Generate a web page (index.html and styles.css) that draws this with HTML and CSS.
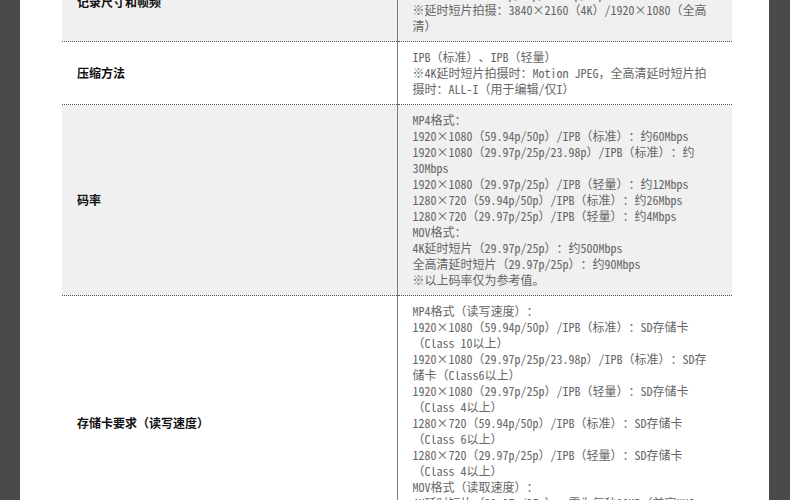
FILE: index.html
```html
<!DOCTYPE html>
<html lang="zh-CN">
<head>
  <meta charset="UTF-8">
  <meta name="viewport" content="width=device-width, initial-scale=1.0">
  <title>规格 - 短片</title>
  <link rel="stylesheet" href="styles.css">
</head>
<body>
  <div class="page">
    <table class="spec-table">
      <tr class="row-gray">
        <th>记录尺寸和帧频</th>
        <td>
          1920×1080（59.94p/50p/29.97p/25p）<br>
          1280×720（59.94p/50p/29.97p/25p）<br>
          ※延时短片拍摄：3840×2160（4K）/1920×1080（全高清）
        </td>
      </tr>
      <tr>
        <th>压缩方法</th>
        <td>
          IPB（标准）、IPB（轻量）<br>
          ※4K延时短片拍摄时：Motion JPEG，全高清延时短片拍摄时：ALL-I（用于编辑/仅I）
        </td>
      </tr>
      <tr class="row-gray">
        <th>码率</th>
        <td>
          MP4格式：<br>
          1920×1080（59.94p/50p）/IPB（标准）：约60Mbps<br>
          1920×1080（29.97p/25p/23.98p）/IPB（标准）：约30Mbps<br>
          1920×1080（29.97p/25p）/IPB（轻量）：约12Mbps<br>
          1280×720（59.94p/50p）/IPB（标准）：约26Mbps<br>
          1280×720（29.97p/25p）/IPB（轻量）：约4Mbps<br>
          MOV格式：<br>
          4K延时短片（29.97p/25p）：约500Mbps<br>
          全高清延时短片（29.97p/25p）：约90Mbps<br>
          ※以上码率仅为参考值。
        </td>
      </tr>
      <tr>
        <th>存储卡要求（读写速度）</th>
        <td>
          MP4格式（读写速度）：<br>
          1920×1080（59.94p/50p）/IPB（标准）：SD存储卡（Class 10以上）<br>
          1920×1080（29.97p/25p/23.98p）/IPB（标准）：SD存储卡（Class6以上）<br>
          1920×1080（29.97p/25p）/IPB（轻量）：SD存储卡（Class 4以上）<br>
          1280×720（59.94p/50p）/IPB（标准）：SD存储卡（Class 6以上）<br>
          1280×720（29.97p/25p）/IPB（轻量）：SD存储卡（Class 4以上）<br>
          MOV格式（读取速度）：<br>
          4K延时短片（29.97p/25p）：需为每秒90MB（兼容UHS-I）以上的SD存储卡<br>
          全高清延时短片：SD存储卡（Class 10以上）
        </td>
      </tr>
    </table>
  </div>
</body>
</html>
```

FILE: styles.css
```css
html,
body {
  margin: 0;
  padding: 0;
}

body {
  background: #4a4a4a;
  font-family: "Noto Sans Mono CJK SC", "Noto Sans CJK SC", sans-serif;
  text-spacing-trim: space-all;
}

.page {
  width: 749px;
  min-height: 620px;
  margin-left: 20px;
  background: #fff;
  padding-top: 1px;
}

.spec-table {
  width: 670px;
  margin: -38px 0 0 42px;
  border-collapse: collapse;
  table-layout: fixed;
}

.spec-table th,
.spec-table td {
  padding: 7px 15px;
  border-bottom: 1px dotted #555;
  vertical-align: middle;
  text-align: left;
  font-size: 12px;
  line-height: 16px;
}

.spec-table th {
  width: 335px;
  box-sizing: border-box;
  border-right: 1px solid #7a7a7a;
  color: #111;
  font-weight: bold;
}

.spec-table td {
  color: #666;
}

.row-gray th,
.row-gray td {
  background: #f0f0f0;
}
```
